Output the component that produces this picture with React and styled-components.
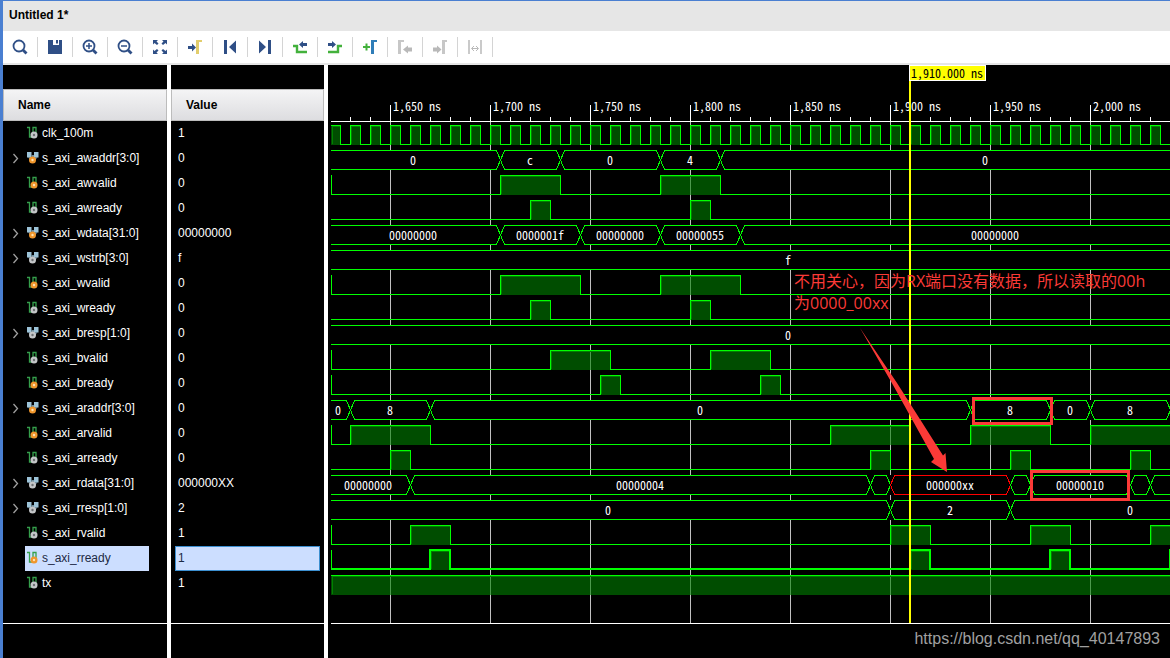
import React from 'react';
import styled, { createGlobalStyle } from 'styled-components';

const GlobalStyle = createGlobalStyle`
  * {
    box-sizing: border-box;
  }
  body {
    margin: 0;
    background: #000;
    font-family: "Liberation Sans", Arial, sans-serif;
    font-size: 12px;
  }
`;

const Page = styled.div`
  display: flex;
  flex-direction: column;
  min-height: 100vh;
  border-top: 1px solid #4a7fd1;
  border-left: 3px solid #4a7fd1;
  overflow: hidden;
`;

const TitleBar = styled.h1`
  margin: 0;
  padding: 0 6px;
  height: 30px;
  line-height: 28px;
  background: #e6e6e6;
  color: #000;
  font-size: 12px;
  font-weight: bold;
`;

const Toolbar = styled.div`
  display: flex;
  align-items: center;
  height: 34px;
  background: #fff;
  border-bottom: 2px solid #e6e6e6;
`;

const ToolButton = styled.button`
  display: flex;
  align-items: center;
  justify-content: center;
  width: 35px;
  height: 20px;
  padding: 0;
  border: 0;
  border-right: 1px solid #d4d4d4;
  background: none;
  cursor: pointer;
  &:disabled {
    cursor: default;
  }
`;

const Viewer = styled.main`
  display: flex;
  flex: 1;
  background: #000;
`;

const SignalTable = styled.table`
  flex: none;
  width: 325px;
  table-layout: fixed;
  border-collapse: separate;
  border-spacing: 0;
  color: #fff;
  th, td {
    padding: 0;
    border-right: 4px solid #fff;
    text-align: left;
  }
`;

const NameCol = styled.col`
  width: 168px;
`;

const Spacer = styled.tr`
  height: ${props => props.$height}px;
`;

const FooterRow = styled.tr`
  height: 35px;
  td {
    border-top: 1px solid #fff;
  }
`;

const HeaderLabel = styled.div`
  height: 32px;
  padding: 0 14px;
  line-height: 30px;
  border: 1px solid #bcbcbc;
  background: linear-gradient(#f4f4f5, #dddde0);
  color: #000;
  font-weight: bold;
`;

const NameCell = styled.div`
  display: flex;
  align-items: center;
  height: 25px;
  padding-right: 18px;
`;

const ExpandSlot = styled.div`
  display: flex;
  width: 22px;
  padding: 0 0 2px 8px;
`;

const ExpandButton = styled.button`
  display: flex;
  width: 10px;
  height: 12px;
  padding: 0;
  border: 0;
  background: none;
  cursor: pointer;
`;

const NameLabel = styled.div`
  display: flex;
  flex: 1;
  align-items: center;
  gap: 3px;
  height: 25px;
  padding: 0 0 2px 2px;
  white-space: nowrap;
  background: ${props => (props.$selected ? '#ccdeff' : 'transparent')};
  color: ${props => (props.$selected ? '#1c2a44' : '#fff')};
`;

const ValueLabel = styled.div`
  height: 25px;
  margin: 0 4px;
  padding-left: 2px;
  line-height: 23px;
  border: 1px solid ${props => (props.$selected ? '#3c8fd0' : 'transparent')};
  background: ${props => (props.$selected ? '#ccdeff' : 'transparent')};
  color: ${props => (props.$selected ? '#1c2a44' : '#fff')};
`;

const WavePane = styled.section`
  position: relative;
  flex: 1;
  min-width: 0;
`;

const WaveSvg = styled.svg`
  display: block;
  width: 100%;
  height: 593px;
  text {
    fill: #fff;
    font-family: "Noto Sans Mono CJK SC", "Liberation Mono", monospace;
    font-size: 12px;
  }
`;

const CursorLabel = styled.div`
  position: absolute;
  top: 0;
  left: 581px;
  height: 16px;
  padding: 0 2px 0 1px;
  border: 1px solid #fff;
  background: #ff0;
  color: #000;
  font-family: "Noto Sans Mono CJK SC", "Liberation Mono", monospace;
  font-size: 12px;
  line-height: 14px;
  white-space: pre;
`;

const Note = styled.p`
  position: absolute;
  top: 205px;
  left: 466px;
  width: 364px;
  margin: 0;
  color: #fb3a37;
  font-family: "Open Sans", "Noto Sans CJK SC", sans-serif;
  font-size: 16px;
  line-height: 22px;
`;

const Watermark = styled.span`
  position: absolute;
  right: 10px;
  bottom: 8px;
  color: #a0a0a0;
  font-size: 16px;
  line-height: 22px;
`;

const BLUE = '#2f4f86';
const GREEN = '#43b13c';
const GRAY = '#b9b9b9';

const lens = (
  <>
    <circle cx="7" cy="7" r="5.5" fill="none" stroke={BLUE} strokeWidth="1.8" />
    <path d="M11 11l3.500 3.500" stroke={BLUE} strokeWidth="2.8" />
  </>
);

const tools = [
  { label: 'Search', icon: lens },
  {
    label: 'Save',
    icon: <path d="M1 1h5v5h6V1h3v14H1zM9 1h2v3.500H9z" fill={BLUE} />,
  },
  {
    label: 'Zoom in',
    icon: <>{lens}<path d="M4 7h6M7 4v6" stroke={BLUE} strokeWidth="1.5" /></>,
  },
  {
    label: 'Zoom out',
    icon: <>{lens}<path d="M4 7h6" stroke={BLUE} strokeWidth="1.5" /></>,
  },
  {
    label: 'Zoom fit',
    icon: (
      <path
        d="M1 1h5L4.500 2.500l2 2-1.500 1.500-2.500-2L1 5.500zM15 1h-5l1.500 1.500-2 2L11 6l2.500-2L15 5.500zM1 15h5l-1.500-1.500 2-2L5 10l-2.500 2L1 10.500zM15 15h-5l1.500-1.500-2-2L11 10l2.500 2 1.500-1.500z"
        fill={BLUE}
      />
    ),
  },
  {
    label: 'Go to cursor',
    icon: (
      <>
        <path d="M1 7h4V4.500L9 8.500l-4 4V10H1z" fill={BLUE} />
        <path d="M9 15V1h6v2h-3v12z" fill="#e2cd6c" />
      </>
    ),
  },
  { label: 'Go to start', icon: <path d="M2 1h3v14H2zM14 1.500v13L7 8z" fill={BLUE} /> },
  { label: 'Go to end', icon: <path d="M11 1h3v14h-3zM2 1.500v13L9 8z" fill={BLUE} /> },
  {
    label: 'Previous transition',
    icon: (
      <>
        <path d="M1 7h4v6h10" fill="none" stroke={GREEN} strokeWidth="2.4" />
        <path d="M15 4h-4V2L7 5.500 11 9V7h4z" fill={BLUE} />
      </>
    ),
  },
  {
    label: 'Next transition',
    icon: (
      <>
        <path d="M1 13h10V7h4" fill="none" stroke={GREEN} strokeWidth="2.4" />
        <path d="M1 4h4V2l4 3.500L5 9V7H1z" fill={BLUE} />
      </>
    ),
  },
  {
    label: 'Add marker',
    icon: (
      <>
        <path d="M1 8h7M4.500 4.500v7" stroke={GREEN} strokeWidth="2" />
        <path d="M9 15V1h6v2h-3v12z" fill="#2f7db8" />
      </>
    ),
  },
  {
    label: 'Previous marker',
    disabled: true,
    icon: (
      <>
        <path d="M1 15V1h6v2H4v12z" fill={GRAY} opacity="0.8" />
        <path d="M15 8.500h-4V6.500L6 10.500l5 4v-2h4z" fill={GRAY} />
      </>
    ),
  },
  {
    label: 'Next marker',
    disabled: true,
    icon: (
      <>
        <path d="M10 15V1h5v2h-2v12z" fill={GRAY} opacity="0.8" />
        <path d="M1 8.500h4V6.500l4.500 4-4.500 4v-2H1z" fill={GRAY} />
      </>
    ),
  },
  {
    label: 'Swap cursors',
    disabled: true,
    icon: (
      <>
        <path d="M2 1v14M14 1v14" stroke={GRAY} strokeWidth="2" opacity="0.75" />
        <path d="M5 9.500h6M7 7L4.500 9.500 7 12M9 7l2.500 2.500L9 12" fill="none" stroke={GRAY} />
      </>
    ),
  },
];

// time axis: 2px per ns, 1650ns sits 62px from the left edge of the pane
const START = 1618;
const END = 2080;
const LEFT = 3;
const ROW = 25;
const FIRST_ROW = 56;
const CURSOR = 1910;
const LINE = '#00ff00';

const toX = t => 62 + (t - 1650) * 2;

const clockPulses = [];
for (let t = 1620; t < END; t += 10) {
  clockPulses.push([t, t + 5]);
}

const signals = [
  { name: 'clk_100m', value: '1', pulses: clockPulses },
  { name: 's_axi_awaddr[3:0]', value: '0', input: true, edges: [1705, 1735, 1785, 1815], data: ['0', 'c', '0', '4', '0'] },
  { name: 's_axi_awvalid', value: '0', input: true, tick: true, pulses: [[1705, 1735], [1785, 1815]] },
  { name: 's_axi_awready', value: '0', pulses: [[1720, 1730], [1800, 1810]] },
  { name: 's_axi_wdata[31:0]', value: '00000000', input: true, edges: [1705, 1745, 1785, 1825], data: ['00000000', '0000001f', '00000000', '00000055', '00000000'] },
  { name: 's_axi_wstrb[3:0]', value: 'f', edges: [], data: ['f'] },
  { name: 's_axi_wvalid', value: '0', input: true, tick: true, pulses: [[1705, 1745], [1785, 1825]] },
  { name: 's_axi_wready', value: '0', pulses: [[1720, 1730], [1800, 1810]] },
  { name: 's_axi_bresp[1:0]', value: '0', edges: [], data: ['0'] },
  { name: 's_axi_bvalid', value: '0', tick: true, pulses: [[1730, 1760], [1810, 1840]] },
  { name: 's_axi_bready', value: '0', input: true, tick: true, pulses: [[1755, 1765], [1835, 1845]] },
  { name: 's_axi_araddr[3:0]', value: '0', input: true, edges: [1630, 1670, 1940, 1980, 2000, 2040], data: ['0', '8', '0', '8', '0', '8', ''] },
  { name: 's_axi_arvalid', value: '0', input: true, tick: true, pulses: [[1630, 1670], [1870, 1910], [1940, 1980], [2000, END]] },
  { name: 's_axi_arready', value: '0', pulses: [[1650, 1660], [1890, 1900], [1960, 1970], [2020, 2030]] },
  { name: 's_axi_rdata[31:0]', value: '000000XX', edges: [1660, 1890, 1900, 1960, 1970, 2020, 2030], data: ['00000000', '00000004', '', '000000xx', '', '00000010', '', ''] },
  { name: 's_axi_rresp[1:0]', value: '2', edges: [1900, 1960], data: ['0', '2', '0'] },
  { name: 's_axi_rvalid', value: '1', tick: true, pulses: [[1660, 1680], [1900, 1920], [1970, 1990], [2030, END]] },
  { name: 's_axi_rready', value: '1', input: true, tick: true, selected: true, pulses: [[1670, 1680], [1910, 1920], [1980, 1990], [2040, END]] },
  { name: 'tx', value: '1', pulses: [[1600, END]] },
];

const majorTicks = [1650, 1700, 1750, 1800, 1850, 1900, 1950, 2000];
const minorTicks = [];
for (let t = 1630; t < END; t += 10) {
  if (t % 50 !== 0) minorTicks.push(t);
}

function SignalIcon({ bus, input }) {
  return (
    <svg width="12" height="13" viewBox="0 -1 12 13" aria-hidden="true">
      {bus ? (
        <>
          <path d="M0 0h4.500v5.500H0zM7 0h4.500v5.500H7z" fill="#9cc3d8" />
          <path d="M1 5h3.500V3H7v2h3.500l-2 3H3z" fill="#6f8d9d" />
        </>
      ) : (
        <path d="M0 .5h2.500v9.500h3.500V.5h3v6" fill="none" stroke="#35a04c" strokeWidth="1.300" />
      )}
      <circle cx={bus ? 5.5 : 7} cy="8" r="3.500" fill={input ? '#f0962c' : '#c4c6c8'} />
      <circle cx={bus ? 5.5 : 7} cy="8" r="1.200" fill={input ? '#ffe2b0' : '#6c6f72'} />
    </svg>
  );
}

function BitWave({ pulses, top, tick, selected }) {
  // the selected lane is drawn 2px thick, so its centre line sits on whole pixels
  const half = selected ? 0 : 0.5;
  const hi = top + 4 + half;
  const lo = top + 23 + half;
  let line = `M${LEFT} ${lo}`;
  pulses.forEach(([from, to]) => {
    const x0 = Math.max(toX(from), LEFT - 1) + half;
    const x1 = toX(to) + half;
    line += `H${x0}V${hi}H${x1}V${lo}`;
  });
  line += `H${toX(END)}`;
  return (
    <g>
      {pulses.map(([from, to]) => {
        const x0 = Math.max(toX(from), LEFT);
        const x1 = toX(to);
        return (
          <g key={from}>
            <rect x={x0} y={top + 5} width={x1 - x0} height="19" fill="#008000" fillOpacity="0.6" />
            <path d={`M${x0 + 1.5} ${top + 23}V${top + 5.5}H${x1}`} fill="none" stroke="#008000" />
          </g>
        );
      })}
      <path d={line} fill="none" stroke={LINE} strokeWidth={selected ? 2 : 1} />
      {tick && <rect x={LEFT} y={top + 4} width="1" height="20" fill={LINE} />}
    </g>
  );
}

function BusWave({ edges, data, top }) {
  const hi = top + 4.5;
  const lo = top + 23.5;
  const mid = top + 14;
  const bounds = [START, ...edges, END];
  return (
    <g>
      <rect x={LEFT} y={top + 4} width={toX(END)} height="20" fill="#000" />
      {data.map((text, i) => {
        const x0 = toX(bounds[i]) + 0.5;
        const x1 = toX(bounds[i + 1]) + 0.5;
        return (
          <path
            key={i}
            d={`M${x0} ${mid}L${x0 + 4} ${hi}H${x1 - 4}L${x1} ${mid}L${x1 - 4} ${lo}H${x0 + 4}Z`}
            fill="none"
            stroke={text.includes('x') ? '#ff0000' : LINE}
          />
        );
      })}
      {data.map((text, i) => (
        <text key={i} x={(toX(bounds[i]) + toX(bounds[i + 1])) / 2} y={top + 19} textAnchor="middle">
          {text}
        </text>
      ))}
    </g>
  );
}

function WaveChart() {
  const bottom = 558;
  return (
    <WaveSvg role="img" aria-label="Waveforms">
      <defs>
        <clipPath id="lanes">
          <rect x={LEFT} y="0" width="100%" height="593" />
        </clipPath>
      </defs>
      <g shapeRendering="crispEdges">
        {majorTicks.map(t => (
          <rect key={t} x={toX(t)} y={FIRST_ROW} width="1" height={bottom - FIRST_ROW} fill="#c0c0c0" />
        ))}
        {majorTicks.map(t => (
          <rect key={t} x={toX(t)} y="40" width="1" height="17" fill="#fff" />
        ))}
        {minorTicks.map(t => (
          <rect key={t} x={toX(t)} y="52" width="1" height="5" fill="#fff" />
        ))}
        <rect x={LEFT} y={FIRST_ROW} width="100%" height="1" fill="#fff" />
        <rect x={LEFT} y={bottom} width="100%" height="1" fill="#fff" />
      </g>
      {majorTicks.map(t => (
        <text key={t} x={toX(t) + 3} y="46">{`${t.toLocaleString('en-US')} ns`}</text>
      ))}
      <g clipPath="url(#lanes)" shapeRendering="crispEdges">
        {signals.map((signal, i) =>
          signal.data ? (
            <BusWave key={signal.name} {...signal} top={FIRST_ROW + i * ROW} />
          ) : (
            <BitWave key={signal.name} {...signal} top={FIRST_ROW + i * ROW} />
          )
        )}
      </g>
      <rect x={toX(CURSOR) - 1} y="0" width="2" height={bottom} fill="#ff0" />
      <g fill="none" stroke="#fb3a37" strokeWidth="3">
        <rect x="645.5" y="333.5" width="78" height="25" />
        <rect x="703.5" y="406.5" width="97" height="28" />
      </g>
      <path d="M532 263L569 318 615 390.500l2.500-2.500L619 407l-16-10 3-3L565 320z" fill="#fb3a37" />
    </WaveSvg>
  );
}

function SignalRow({ name, value, data, input, selected }) {
  const bus = Boolean(data);
  return (
    <tr>
      <td>
        <NameCell>
          <ExpandSlot>
            {bus && (
              <ExpandButton aria-label={`Expand ${name}`}>
                <svg width="10" height="12" viewBox="0 0 10 12">
                  <path d="M2.500 2l4 4.500-4 4.500" fill="none" stroke="#a0a0a0" strokeWidth="1.300" />
                </svg>
              </ExpandButton>
            )}
          </ExpandSlot>
          <NameLabel $selected={selected}>
            <SignalIcon bus={bus} input={input} />
            {name}
          </NameLabel>
        </NameCell>
      </td>
      <td>
        <ValueLabel $selected={selected}>{value}</ValueLabel>
      </td>
    </tr>
  );
}

export default function App() {
  return (
    <>
      <GlobalStyle />
      <Page>
        <TitleBar>Untitled 1*</TitleBar>
        <Toolbar role="toolbar">
          {tools.map(tool => (
            <ToolButton key={tool.label} aria-label={tool.label} disabled={tool.disabled}>
              <svg width="16" height="16" viewBox="0 0 16 16">{tool.icon}</svg>
            </ToolButton>
          ))}
        </Toolbar>
        <Viewer>
          <SignalTable>
            <colgroup>
              <NameCol />
              <col />
            </colgroup>
            <thead>
              <Spacer $height={24}><td /><td /></Spacer>
              <tr>
                <th><HeaderLabel>Name</HeaderLabel></th>
                <th><HeaderLabel>Value</HeaderLabel></th>
              </tr>
            </thead>
            <tbody>
              {signals.map(signal => (
                <SignalRow key={signal.name} {...signal} />
              ))}
              <Spacer $height={27}><td /><td /></Spacer>
              <FooterRow><td /><td /></FooterRow>
            </tbody>
          </SignalTable>
          <WavePane>
            <WaveChart />
            <CursorLabel>1,910.000 ns</CursorLabel>
            <Note>不用关心，因为RX端口没有数据，所以读取的00h为0000_00xx</Note>
            <Watermark>https://blog.csdn.net/qq_40147893</Watermark>
          </WavePane>
        </Viewer>
      </Page>
    </>
  );
}
